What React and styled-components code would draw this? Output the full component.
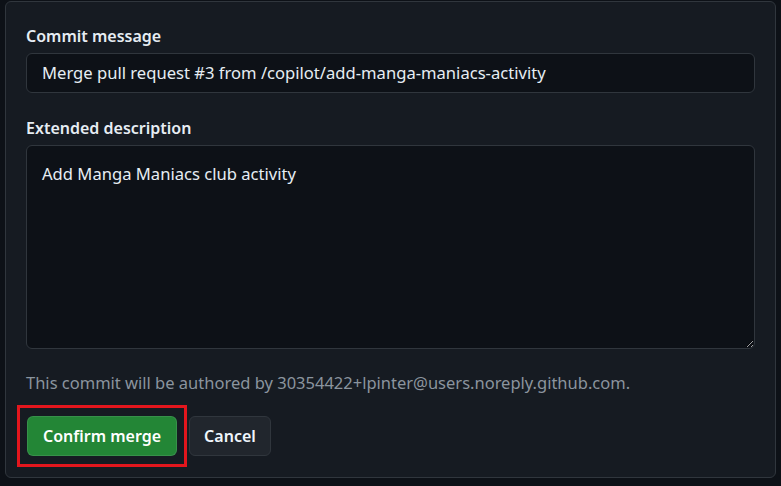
import styled, { createGlobalStyle } from 'styled-components';

const GlobalStyle = createGlobalStyle`
  html, body {
    margin: 0;
    padding: 0;
    background: #0d1117;
  }
  body {
    font-family: "Noto Sans", "Liberation Sans", sans-serif;
    color: #e6edf3;
  }
`;

const Page = styled.div`
  padding: 1px 5px 8px 5px;
  width: 781px;
  height: 486px;
  box-sizing: border-box;
`;

const Card = styled.form`
  background: #161b22;
  border: 1px solid #30363d;
  border-radius: 6px;
  padding: 22px 20px 10px 20px;
  display: flex;
  flex-direction: column;
  height: 477px;
  box-sizing: border-box;
`;

const Label = styled.label`
  font-size: 16px;
  font-weight: 600;
  line-height: 24px;
  margin: ${(p) => p.$top || 0}px 0 5px 0;
  color: #e6edf3;
`;

const Input = styled.input`
  height: 40px;
  box-sizing: border-box;
  background: #0d1117;
  border: 1px solid #30363d;
  border-radius: 6px;
  color: #e6edf3;
  font: inherit;
  font-size: 16.6px;
  padding: 0 15px;
  outline: none;
`;

const TextArea = styled.textarea`
  height: 206px;
  box-sizing: border-box;
  background: #0d1117;
  border: 1px solid #30363d;
  border-radius: 6px;
  color: #e6edf3;
  font: inherit;
  font-size: 16.6px;
  line-height: 24px;
  padding: 16px 15px;
  resize: vertical;
  outline: none;
`;

const Note = styled.p`
  margin: 22px 0 0 0;
  font-size: 16.5px;
  line-height: 24px;
  color: #8b949e;
`;

const Actions = styled.div`
  display: flex;
  align-items: center;
  gap: 2px;
  margin: 10px 0 0 -9px;
`;

const Highlight = styled.div`
  border: 3px solid #e3161d;
  padding: 8px 7px;
  display: flex;
`;

const Button = styled.button`
  height: 40px;
  box-sizing: border-box;
  border-radius: 6px;
  font-family: "Noto Sans", sans-serif;
  font-size: 16px;
  font-weight: 600;
  padding: 0 ${(p) => (p.$primary ? 15 : 14)}px;
  cursor: pointer;
  color: ${(p) => (p.$primary ? '#ffffff' : '#f0f6fc')};
  background: ${(p) => (p.$primary ? '#238636' : '#21262d')};
  border: 1px solid ${(p) => (p.$primary ? 'rgba(240,246,252,0.1)' : '#30363d')};
`;

export default function App() {
  return (
    <>
      <GlobalStyle />
      <Page>
        <Card>
          <Label>Commit message</Label>
          <Input defaultValue="Merge pull request #3 from /copilot/add-manga-maniacs-activity" />
          <Label $top={23}>Extended description</Label>
          <TextArea defaultValue="Add Manga Maniacs club activity" />
          <Note>This commit will be authored by 30354422+lpinter@users.noreply.github.com.</Note>
          <Actions>
            <Highlight>
              <Button type="button" $primary>Confirm merge</Button>
            </Highlight>
            <Button type="button">Cancel</Button>
          </Actions>
        </Card>
      </Page>
    </>
  );
}
